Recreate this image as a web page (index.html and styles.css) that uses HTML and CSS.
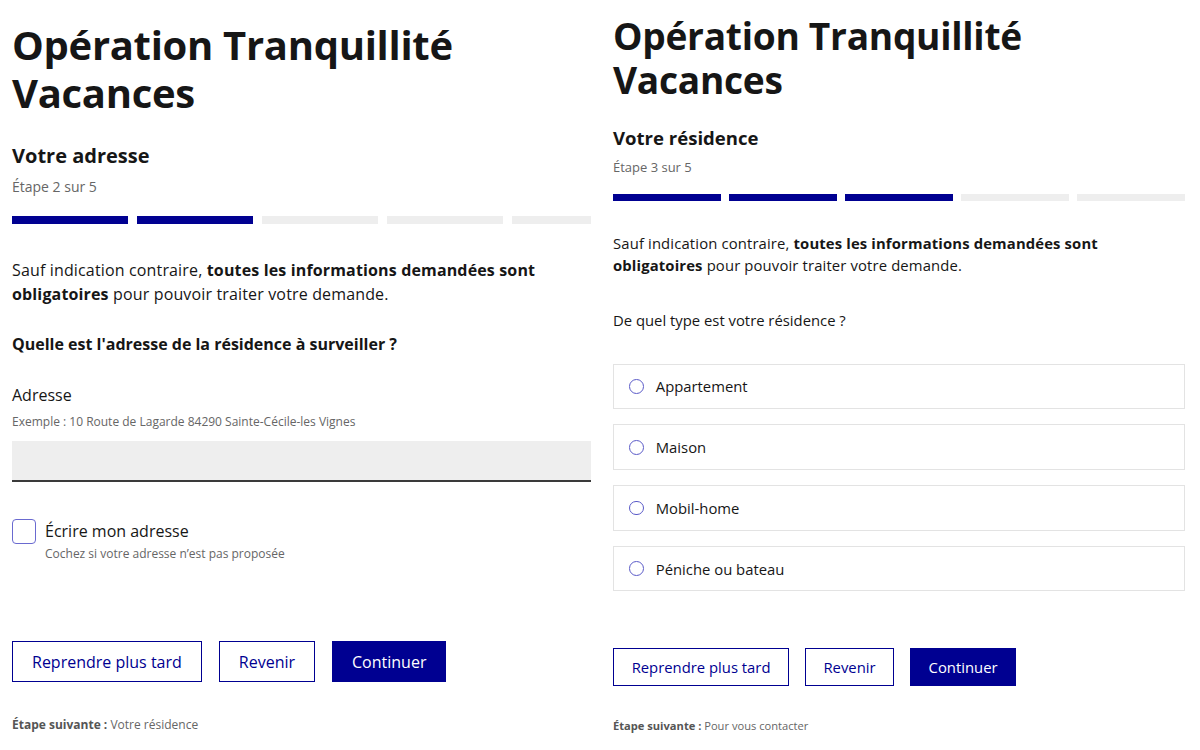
FILE: index.html
```html
<!DOCTYPE html>
<html lang="fr">
<head>
<meta charset="utf-8">
<title>Opération Tranquillité Vacances</title>
<link rel="stylesheet" href="styles.css">
</head>
<body>
<div class="screens">
  <section class="panel panel--clip">
    <div class="page page--address">
      <h1 class="title">Opération Tranquillité Vacances</h1>
      <h2 class="step-title">Votre adresse</h2>
      <p class="step-state">Étape 2 sur 5</p>
      <div class="bars">
        <span class="bar bar--done"></span>
        <span class="bar bar--done"></span>
        <span class="bar"></span>
        <span class="bar"></span>
        <span class="bar"></span>
      </div>
      <p class="intro">Sauf indication contraire, <strong>toutes les informations demandées sont obligatoires</strong> pour pouvoir traiter votre demande.</p>
      <p class="question question--bold">Quelle est l'adresse de la résidence à surveiller ?</p>
      <p class="field-label">Adresse</p>
      <p class="field-hint">Exemple : 10 Route de Lagarde 84290 Sainte-Cécile-les Vignes</p>
      <div class="input"></div>
      <div class="check">
        <span class="check-box"></span>
        <div class="check-text">
          <p class="check-label">Écrire mon adresse</p>
          <p class="check-hint">Cochez si votre adresse n’est pas proposée</p>
        </div>
      </div>
      <div class="buttons">
        <button class="btn btn--secondary">Reprendre plus tard</button>
        <button class="btn btn--secondary">Revenir</button>
        <button class="btn btn--primary">Continuer</button>
      </div>
      <p class="next"><strong>Étape suivante :</strong> Votre résidence</p>
    </div>
  </section>

  <section class="panel panel--zoom">
    <div class="page page--residence">
      <h1 class="title">Opération Tranquillité Vacances</h1>
      <h2 class="step-title">Votre résidence</h2>
      <p class="step-state">Étape 3 sur 5</p>
      <div class="bars">
        <span class="bar bar--done"></span>
        <span class="bar bar--done"></span>
        <span class="bar bar--done"></span>
        <span class="bar"></span>
        <span class="bar"></span>
      </div>
      <p class="intro">Sauf indication contraire, <strong>toutes les informations demandées sont obligatoires</strong> pour pouvoir traiter votre demande.</p>
      <p class="question">De quel type est votre résidence ?</p>
      <div class="radios">
        <div class="radio"><span class="radio-dot"></span><span class="radio-label">Appartement</span></div>
        <div class="radio"><span class="radio-dot"></span><span class="radio-label">Maison</span></div>
        <div class="radio"><span class="radio-dot"></span><span class="radio-label">Mobil-home</span></div>
        <div class="radio"><span class="radio-dot"></span><span class="radio-label">Péniche ou bateau</span></div>
      </div>
      <div class="buttons">
        <button class="btn btn--secondary">Reprendre plus tard</button>
        <button class="btn btn--secondary">Revenir</button>
        <button class="btn btn--primary">Continuer</button>
      </div>
      <p class="next"><strong>Étape suivante :</strong> Pour vous contacter</p>
    </div>
  </section>
</div>
</body>
</html>
```

FILE: styles.css
```css
* { box-sizing: border-box; }

html, body {
  margin: 0;
  padding: 0;
  background: #ffffff;
}

body {
  font-family: "Open Sans", "Liberation Sans", sans-serif;
  color: #161616;
  width: 1200px;
  height: 750px;
  overflow: hidden;
}

p, h1, h2 { margin: 0; }

.screens {
  display: flex;
  gap: 22px;
  align-items: flex-start;
}

.panel--clip {
  width: 591px;
  padding-left: 12px;
  overflow: hidden;
  flex: none;
}

.panel--zoom {
  zoom: 0.928;
  flex: none;
}

.page {
  width: 616px;
  display: flex;
  flex-direction: column;
  align-items: flex-start;
}

.title {
  font-size: 40px;
  line-height: 48px;
  font-weight: 700;
  letter-spacing: -0.3px;
  width: 520px;
}
.page--address .title { margin-top: 21px; }
.page--residence .title { margin-top: 15px; }

.step-title {
  font-size: 20px;
  line-height: 28px;
  font-weight: 700;
}
.page--address .step-title { margin-top: 25px; }
.page--residence .step-title { margin-top: 24px; }

.step-state {
  margin-top: 7px;
  font-size: 14px;
  line-height: 20px;
  color: #666666;
}

.bars {
  margin-top: 19px;
  width: 616px;
  height: 8px;
  display: grid;
  grid-template-columns: repeat(5, 1fr);
  gap: 9px;
}
.bar { background: #eeeeee; }
.bar--done { background: #000091; }

.intro {
  font-size: 16px;
  line-height: 24px;
  letter-spacing: 0.15px;
  width: 570px;
}
.page--address .intro { margin-top: 34px; }
.page--residence .intro { margin-top: 33px; }
.intro strong { font-weight: 700; }

.question {
  font-size: 16px;
  line-height: 24px;
}
.question--bold { font-weight: 700; margin-top: 26px; }
.page--residence .question { margin-top: 35px; }

.field-label {
  margin-top: 27px;
  font-size: 16px;
  line-height: 24px;
}
.field-hint {
  margin-top: 5px;
  font-size: 12px;
  line-height: 20px;
  color: #666666;
}
.input {
  margin-top: 9px;
  width: 616px;
  height: 41px;
  background: #eeeeee;
  border-bottom: 2px solid #3a3a3a;
}

.check {
  margin-top: 37px;
  display: flex;
  gap: 9px;
  align-items: flex-start;
}
.check-box {
  width: 24px;
  height: 25px;
  border: 1px solid #6a6ad0;
  border-radius: 4px;
  flex: none;
}
.check-label {
  font-size: 16px;
  line-height: 24px;
}
.check-hint {
  margin-top: 1px;
  font-size: 12px;
  line-height: 20px;
  color: #666666;
}

.radios {
  margin-top: 35px;
  width: 616px;
  display: flex;
  flex-direction: column;
  gap: 16.5px;
}
.radio {
  height: 49px;
  border: 1px solid #e3e3e3;
  display: flex;
  align-items: center;
  padding-left: 16px;
  gap: 13px;
}
.radio-dot {
  width: 16px;
  height: 16px;
  border: 1px solid #5a5ac8;
  border-radius: 50%;
  flex: none;
}
.radio-label {
  font-size: 16px;
  line-height: 24px;
}

.buttons {
  display: flex;
  gap: 17px;
}
.page--address .buttons { margin-top: 77px; }
.page--residence .buttons { margin-top: 61px; }

.btn {
  height: 41px;
  padding: 0 19px;
  font-family: inherit;
  font-size: 16px;
  font-weight: 500;
  border: 1px solid #000091;
  background: #ffffff;
  color: #000091;
  cursor: pointer;
}
.btn--primary {
  background: #000091;
  color: #ffffff;
}

.next {
  margin-top: 33px;
  font-size: 12px;
  line-height: 20px;
  color: #666666;
}
.next strong {
  font-weight: 700;
  color: #555555;
}
```
